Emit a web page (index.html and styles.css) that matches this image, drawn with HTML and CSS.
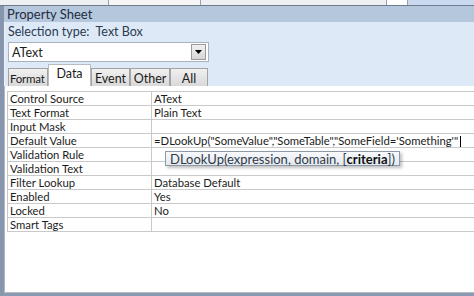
FILE: index.html
```html
<!DOCTYPE html>
<html lang="en">
<head>
    <meta charset="UTF-8">
    <title>Property Sheet</title>
    <link rel="stylesheet" href="styles.css">
</head>
<body>
    <div class="topstrip">
        <span class="seg seg1"></span>
        <span class="seg seg2"></span>
        <span class="seg seg3"></span>
        <span class="seg seg4"></span>
        <span class="seg seg5"></span>
    </div>
    <div class="frame">
        <div class="titlebar">Property Sheet</div>
        <div class="pane">
            <div class="seltype">Selection type:&nbsp; Text Box</div>
            <div class="combo">
                <span class="combo-text">AText</span>
                <span class="combo-btn">
                    <svg width="7" height="4" viewBox="0 0 7 4"><path d="M0 0h7L3.5 4z" fill="#000"/></svg>
                </span>
            </div>
            <div class="tabs">
                <span class="tab tab-format">Format</span>
                <span class="tab active">Data</span>
                <span class="tab tab-event">Event</span>
                <span class="tab tab-other">Other</span>
                <span class="tab tab-all">All</span>
            </div>
        </div>
        <div class="sheet">
            <table class="grid">
                <tr><td class="label">Control Source</td><td>AText</td></tr>
                <tr><td class="label">Text Format</td><td>Plain Text</td></tr>
                <tr><td class="label">Input Mask</td><td></td></tr>
                <tr><td class="label">Default Value</td><td class="editing">=DLookUp("SomeValue","SomeTable","SomeField='Something'"<span class="caret"></span></td></tr>
                <tr><td class="label">Validation Rule</td><td class="tipcell"><div class="tip">DLookUp(expression, domain, [<b>criteria</b>])</div></td></tr>
                <tr><td class="label">Validation Text</td><td></td></tr>
                <tr><td class="label">Filter Lookup</td><td>Database Default</td></tr>
                <tr><td class="label">Enabled</td><td>Yes</td></tr>
                <tr><td class="label">Locked</td><td>No</td></tr>
                <tr><td class="label">Smart Tags</td><td></td></tr>
            </table>
        </div>
    </div>
</body>
</html>
```

FILE: styles.css
```css
body {
    margin: 0;
    width: 474px;
    height: 296px;
    overflow: hidden;
    background: #dde9f7;
    font-family: Lato, 'Noto Sans', sans-serif;
    font-size: 12px;
    color: #1b1b1b;
}

/* tira da janela de cima */
.topstrip {
    display: flex;
    height: 5px;
    background: #eef0f3;
    border-bottom: 1px solid #6e7b8c;
}
.seg { height: 5px; }
.seg1 { width: 108px; border-right: 1px solid #9aa3ad; }
.seg2 { width: 91px; border-right: 1px solid #9aa3ad; background: #f6f6f6; }
.seg3 { width: 185px; border-right: 1px solid #9aa3ad; }
.seg4 { width: 20px; background: #fff; border-right: 1px solid #9aa3ad; }
.seg5 { flex: 1; background: #c9d9ee; }

.frame {
    border-left: 4px solid #8796ad;
    border-bottom: 3px solid #8a9ab2;
    height: 287px;
    display: flex;
    flex-direction: column;
}

.titlebar {
    height: 16px;
    line-height: 17px;
    padding-left: 3px;
    background: #b5c7dd;
    font-size: 13px;
    color: #1f2d3f;
}

.pane {
    padding: 1px 0 0 3px;
    background: #dde9f7;
    border-left: 1px solid #eef4fb;
}

.seltype {
    height: 17px;
    line-height: 17px;
    font-size: 12.5px;
    color: #2b3a4e;
}

.combo {
    display: flex;
    align-items: center;
    justify-content: space-between;
    width: 199px;
    height: 18px;
    margin-top: 2px;
    background: #fff;
    border: 1px solid #a9b3bf;
    font-size: 12.5px;
}
.combo-text { padding-left: 3px; }
.combo-btn {
    display: flex;
    align-items: center;
    justify-content: center;
    width: 13px;
    height: 14px;
    margin-right: 2px;
    background: linear-gradient(#f1f1f1, #d6d6d6);
    border: 1px solid #9a9a9a;
}

.tabs {
    display: flex;
    align-items: flex-end;
    height: 21px;
    margin-top: 3px;
}
.tab {
    height: 17px;
    line-height: 19px;
    text-align: center;
    font-size: 12.5px;
    background: linear-gradient(#f0f0f0, #d9d9d9);
    border: 1px solid #a3a3a3;
    border-bottom: none;
}
.tab-format {
    width: 37px;
    padding-left: 1px;
    text-align: left;
    font-size: 11.5px;
    letter-spacing: -0.2px;
    white-space: nowrap;
}
.tab-event { width: 37px; }
.tab-other { width: 38px; }
.tab-all { width: 36px; }
.tab.active {
    width: 41px;
    height: 21px;
    line-height: 17px;
    background: #fff;
    border-color: #b7bcc3;
}

.sheet {
    flex: 1;
    background: #fff;
    border-left: 1px solid #aeb7c3;
    border-bottom: 1px solid #b9bec4;
    padding: 5px 0 0 2px;
    overflow: hidden;
}

.grid {
    width: 520px;
    border-collapse: collapse;
    table-layout: fixed;
}
.grid td {
    height: 13px;
    padding: 0 0 0 2px;
    line-height: 13px;
    border: 1px solid #c9c9c9;
    border-right: none;
    white-space: nowrap;
    overflow: visible;
    font-size: 11.3px;
}
.grid td.label { width: 141px; }

.caret {
    display: inline-block;
    width: 1px;
    height: 11px;
    margin-left: 2px;
    vertical-align: -2px;
    background: #000;
}

.tipcell { position: relative; }
.tip {
    position: absolute;
    left: 13px;
    top: 3px;
    height: 13px;
    line-height: 14px;
    padding: 0 4px;
    font-size: 13px;
    color: #333a45;
    background: linear-gradient(#f7f9fc, #e3e9f1);
    border: 1px solid #8e99a8;
    box-shadow: 2px 2px 3px rgba(0, 0, 0, 0.25);
}
.tip b { color: #111; }
```
